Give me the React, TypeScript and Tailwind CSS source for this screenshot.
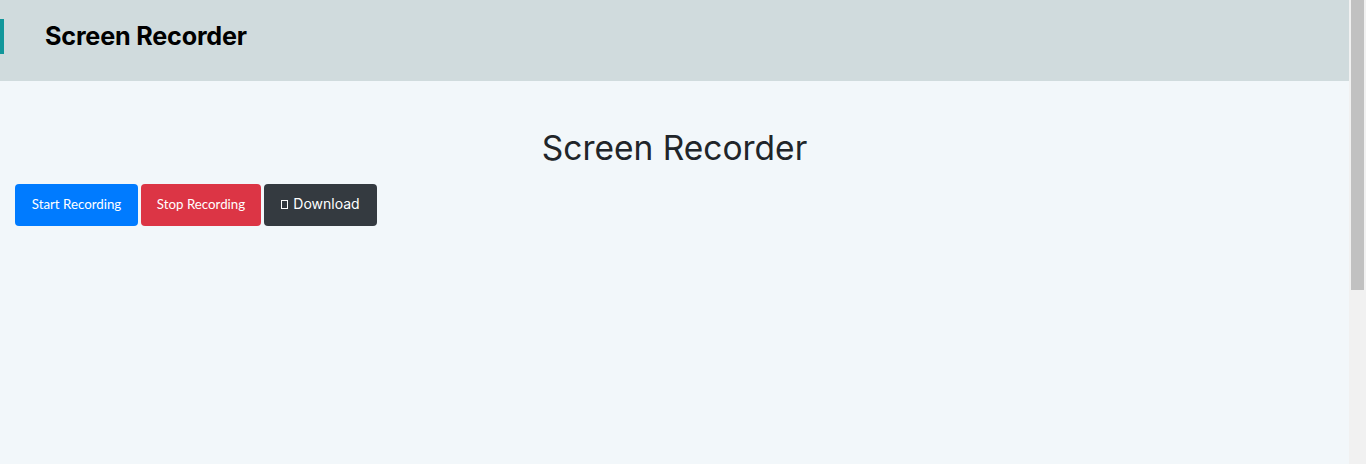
export default function App() {
  return (
    <div className="flex h-[464px] overflow-hidden bg-[#f2f7fa] font-['Inter',sans-serif]">
      <div className="min-h-[742px] flex-1">
        <header className="flex h-[81px] items-start bg-[#d0dbdd] pt-[19px]">
          <div className="h-[35px] w-[4px] bg-[#12979b]" />
          <h1 className="ml-[41px] mt-[2px] text-[25.2px] leading-[31px] font-bold tracking-[-0.2px] text-black">
            Screen Recorder
          </h1>
        </header>
        <main className="px-[15px] pt-[47px]">
          <h2 className="text-center text-[33.5px] leading-[40px] font-normal text-[#212529]">Screen Recorder</h2>
          <div className="mt-[16px] flex gap-[3px] font-['Lato',sans-serif] text-[13.3px] text-white">
            <button className="h-[42px] w-[123px] rounded-[4px] bg-[#007bff]">Start Recording</button>
            <button className="h-[42px] w-[120px] rounded-[4px] bg-[#dc3545]">Stop Recording</button>
            <button className="flex h-[42px] w-[113px] items-center justify-center gap-[5px] rounded-[4px] bg-[#343a40] pb-[3px] font-['Inter',sans-serif] text-[14px]">
              <span className="mt-[2px] inline-block h-[9px] w-[7px] border border-white" />
              Download
            </button>
          </div>
        </main>
      </div>
      {/* page scrollbar */}
      <div className="w-[17px] shrink-0 bg-[#f1f1f1] px-[2px]">
        <div className="h-[290px] bg-[#c1c1c1]" />
      </div>
    </div>
  );
}
